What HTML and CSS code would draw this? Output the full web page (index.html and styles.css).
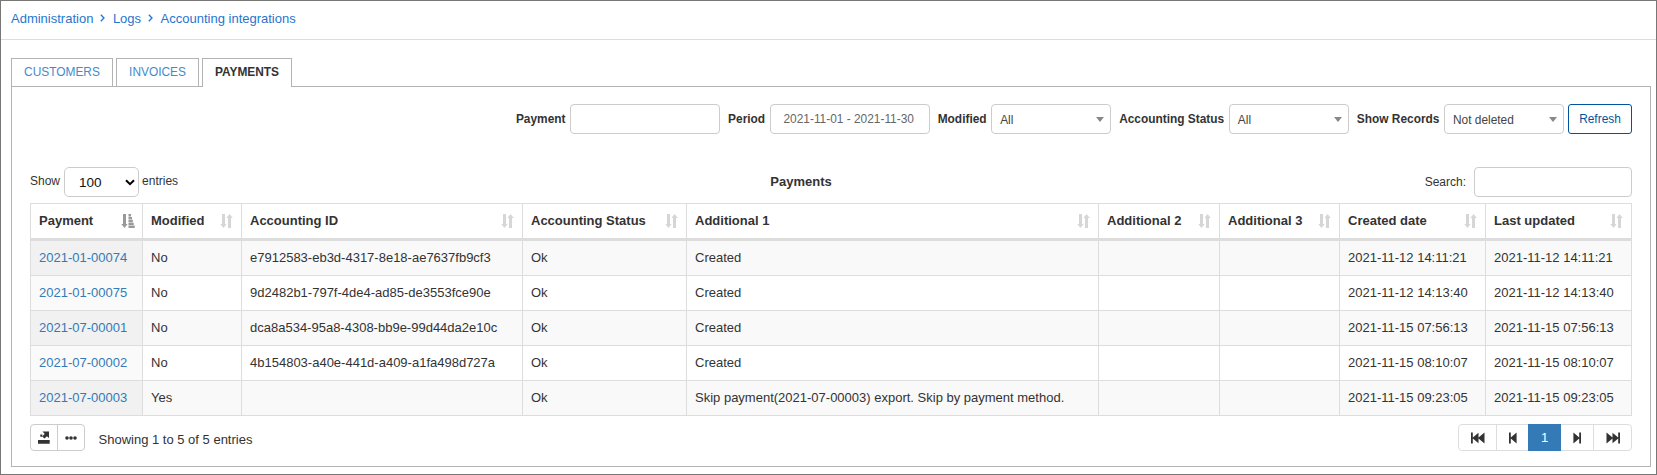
FILE: index.html
```html
<!DOCTYPE html>
<html lang="en">
<head>
<meta charset="utf-8">
<title>Accounting integrations</title>
<link rel="stylesheet" href="styles.css">
</head>
<body>
<svg class="defs" width="0" height="0" aria-hidden="true">
  <symbol id="sort" viewBox="0 0 13 14"><path d="M2 0h3v10h1.600L3.500 14 .3 10H2zM8 14V4H6.400L9.600 0 12.800 4H11v10z"/></symbol>
  <symbol id="sort-asc" viewBox="0 0 14 14"><path d="M2 0h3v10h1.600L3.500 14 .3 10H2zM7.500 0H10v2.400H7.500zM7.500 2.900h3.500v2.400H7.500zM7.500 5.800h4.300v2.400H7.500zM7.500 8.700h5.200v2.400H7.500zM7.500 11.600h6.200V14H7.500z"/></symbol>
  <symbol id="first" viewBox="0 0 14 12"><path d="M0 .5h1.800v5L7.500 .7v4.800L13.500 .5v11L7.500 6.500v4.800L1.800 6.500v5H0z"/></symbol>
  <symbol id="prev" viewBox="0 0 8 12"><path d="M0 .5h1.800v5L7.600 .5v11L1.800 6.500v5H0z"/></symbol>
</svg>
<div class="page">
  <nav class="breadcrumb">
    <a>Administration</a>
    <svg class="chev" viewBox="0 0 5 8"><path d="M.8.800 4 4 .8 7.200"/></svg>
    <a>Logs</a>
    <svg class="chev" viewBox="0 0 5 8"><path d="M.8.800 4 4 .8 7.200"/></svg>
    <a>Accounting integrations</a>
  </nav>
  <div class="tabs">
    <a class="tab customers">CUSTOMERS</a>
    <a class="tab invoices">INVOICES</a>
    <a class="tab active">PAYMENTS</a>
  </div>
  <main class="panel">
    <form class="filters">
      <label>Payment</label><span class="box w150"></span>
      <label>Period</label><span class="box period">2021-11-01 - 2021-11-30</span>
      <label>Modified</label><span class="box select">All<i class="caret"></i></span>
      <label>Accounting Status</label><span class="box select">All<i class="caret"></i></span>
      <label>Show Records</label><span class="box select">Not deleted<i class="caret"></i></span>
      <button type="button" class="refresh">Refresh</button>
    </form>
    <div class="toolbar">
      <div class="length">Show <span class="box count">100<svg viewBox="0 0 10 7"><path d="M1 1.200l4 4 4-4"/></svg></span> entries</div>
      <div class="title">Payments</div>
      <div class="search">Search: <span class="box"></span></div>
    </div>
    <table class="grid">
      <colgroup><col class="c1"><col class="c2"><col class="c3"><col class="c4"><col class="c5"><col class="c6"><col class="c7"><col class="c8"><col class="c8"></colgroup>
      <thead><tr>
        <th><div>Payment<svg class="sorted"><use href="#sort-asc"/></svg></div></th>
        <th><div>Modified<svg><use href="#sort"/></svg></div></th>
        <th><div>Accounting ID<svg><use href="#sort"/></svg></div></th>
        <th><div>Accounting Status<svg><use href="#sort"/></svg></div></th>
        <th><div>Additional 1<svg><use href="#sort"/></svg></div></th>
        <th><div>Additional 2<svg><use href="#sort"/></svg></div></th>
        <th><div>Additional 3<svg><use href="#sort"/></svg></div></th>
        <th><div>Created date<svg><use href="#sort"/></svg></div></th>
        <th><div>Last updated<svg><use href="#sort"/></svg></div></th>
      </tr></thead>
      <tbody>
        <tr><td><a>2021-01-00074</a></td><td>No</td><td>e7912583-eb3d-4317-8e18-ae7637fb9cf3</td><td>Ok</td><td>Created</td><td></td><td></td><td>2021-11-12 14:11:21</td><td>2021-11-12 14:11:21</td></tr>
        <tr><td><a>2021-01-00075</a></td><td>No</td><td>9d2482b1-797f-4de4-ad85-de3553fce90e</td><td>Ok</td><td>Created</td><td></td><td></td><td>2021-11-12 14:13:40</td><td>2021-11-12 14:13:40</td></tr>
        <tr><td><a>2021-07-00001</a></td><td>No</td><td>dca8a534-95a8-4308-bb9e-99d44da2e10c</td><td>Ok</td><td>Created</td><td></td><td></td><td>2021-11-15 07:56:13</td><td>2021-11-15 07:56:13</td></tr>
        <tr><td><a>2021-07-00002</a></td><td>No</td><td>4b154803-a40e-441d-a409-a1fa498d727a</td><td>Ok</td><td>Created</td><td></td><td></td><td>2021-11-15 08:10:07</td><td>2021-11-15 08:10:07</td></tr>
        <tr><td><a>2021-07-00003</a></td><td>Yes</td><td></td><td>Ok</td><td>Skip payment(2021-07-00003) export. Skip by payment method.</td><td></td><td></td><td>2021-11-15 09:23:05</td><td>2021-11-15 09:23:05</td></tr>
      </tbody>
    </table>
    <div class="footer">
      <div class="group actions">
        <span><svg class="export" viewBox="0 0 12 13"><path d="M0 9h11.700v3.700H0zM4.500.500H11V7L8.900 5.200 6.500 7.600 4.300 5.400l2.400-2.600zM2.300 3.500h2v2.300h-2z"/></svg></span>
        <span><svg class="dots" viewBox="0 0 12 4"><circle cx="2" cy="2" r="1.800"/><circle cx="6" cy="2" r="1.800"/><circle cx="10" cy="2" r="1.800"/></svg></span>
      </div>
      <div class="info">Showing 1 to 5 of 5 entries</div>
      <div class="group pages">
        <span class="p1"><svg class="wide"><use href="#first"/></svg></span>
        <span class="p2"><svg class="narrow"><use href="#prev"/></svg></span>
        <span class="current">1</span>
        <span class="p4"><svg class="narrow flip"><use href="#prev"/></svg></span>
        <span class="p5"><svg class="wide flip"><use href="#first"/></svg></span>
      </div>
    </div>
  </main>
</div>
</body>
</html>
```
FILE: styles.css
```css
* { box-sizing: border-box; }
html, body { height: 475px; overflow: hidden; }
body { margin: 0; font: 13px/18px "Liberation Sans", Arial, sans-serif; color: #333; background: #fff; }
.defs { display: block; height: 0; }
.page { width: 1657px; height: 475px; border: 1px solid #777; overflow: hidden; }
.breadcrumb { display: flex; align-items: center; height: 39px; padding: 0 10px 3px; border-bottom: 1px solid #ddd; color: #1f75d1; }
.chev { width: 5px; height: 8px; margin: 0 7.500px 2px 7px; fill: none; stroke: #1f75d1; stroke-width: 1.3; }
.tabs { display: flex; gap: 3px; margin: 18px 0 0 10px; height: 28px; }
.tab { height: 28px; border: 1px solid #b3b3b3; border-bottom: 0; text-align: center; font-size: 11.900px; line-height: 27px; color: #428bca; }
.customers { width: 102px; }
.invoices { width: 83px; }
.tab.active { width: 90px; height: 29px; background: #fff; color: #333; font-weight: bold; position: relative; z-index: 1; }
.panel { width: 1640px; height: 381px; margin-left: 10px; border: 1px solid #b3b3b3; padding: 17px 18px 0; }
.filters { display: flex; justify-content: flex-end; height: 30px; }
label { font-size: 11.900px; font-weight: bold; line-height: 30px; margin: 0 4.600px 0 8px; white-space: nowrap; }
.box { display: block; height: 30px; border: 1px solid #ccc; border-radius: 4px; background: #fff; font-size: 11.900px; line-height: 28px; flex: none; }
.w150 { width: 150px; }
.period { width: 160px; padding-right: 2px; text-align: center; color: #666; }
.select { display: flex; justify-content: space-between; align-items: center; width: 120px; padding: 2px 6px 0 8px; color: #444; }
.caret { border: 4px solid transparent; border-top: 5px solid #888; border-bottom: 0; margin-bottom: 2px; }
.refresh { width: 64px; height: 30px; margin-left: 4px; padding: 0; border: 1px solid #00549e; border-radius: 3px; background: #fff; color: #00549e; font: 11.900px "Liberation Sans", Arial, sans-serif; }
.toolbar { display: grid; grid-template-columns: 1fr auto 1fr; align-items: center; height: 30px; margin-top: 33px; font-size: 12px; }
.length, .search { display: flex; line-height: 28px; height: 30px; }
.count { display: flex; align-items: center; justify-content: space-between; width: 75px; margin: 0 3px 0 4px; padding: 2px 3px 0 14px; border-radius: 5px; font-size: 13.500px; color: #111; }
.count svg { width: 10px; height: 7px; margin-bottom: 2px; fill: none; stroke: #000; stroke-width: 2; }
.title { margin-right: 60px; font-size: 13px; font-weight: bold; }
.search { justify-content: flex-end; line-height: 30px; }
.search .box { width: 158px; margin-left: 8px; }
.grid { width: 1602px; margin-top: 6px; table-layout: fixed; border-collapse: separate; border-spacing: 0; border: solid #ddd; border-width: 1px 0 0 1px; }
.c1 { width: 112px; } .c2 { width: 99px; } .c3 { width: 281px; } .c4 { width: 164px; } .c5 { width: 412px; }
.c6 { width: 121px; } .c7 { width: 120px; } .c8 { width: 146px; }
th, td { padding: 0 8px; border: solid #ddd; border-width: 0 1px 1px 0; text-align: left; white-space: nowrap; }
th { height: 37px; border-bottom-width: 3px; }
th div { display: flex; justify-content: space-between; align-items: center; }
th svg { width: 13px; height: 14px; fill: #d6d6d6; flex: none; }
th .sorted { width: 14px; fill: #999; margin-right: -1px; }
td { height: 35px; }
td a { color: #337ab7; }
tbody tr:nth-child(odd) { background: #f9f9f9; }
tbody td:first-child { background: #fafafa; }
tbody tr:nth-child(odd) td:first-child { background: #f1f1f1; }
.footer { display: flex; align-items: flex-start; margin-top: 8px; }
.group { display: flex; height: 27px; border: 1px solid #ccc; border-radius: 4px; }
.group span { display: flex; align-items: center; justify-content: center; border-right: 1px solid #ccc; }
.group span:last-child { border-right: 0; }
.actions { width: 55px; }
.actions span { flex: 1; }
.export { width: 12px; height: 13px; fill: #333; }
.dots { width: 12px; height: 4px; fill: #333; }
.info { margin: 7px auto 0 13.500px; }
.pages { width: 174px; border-color: #ddd; fill: #333; }
.pages span { border-color: #ddd; }
.p1 { width: 38px; } .p2 { width: 31px; }
.pages .p2 { border-right: 0; }
.pages .current { width: 33px; height: 27px; margin-top: -1px; background: #337ab7; color: #fff; border: 0; }
.p4 { width: 33px; } .p5 { width: 37px; }
.wide { width: 14px; height: 12px; }
.narrow { width: 8px; height: 12px; }
.flip { transform: scaleX(-1); }
```
